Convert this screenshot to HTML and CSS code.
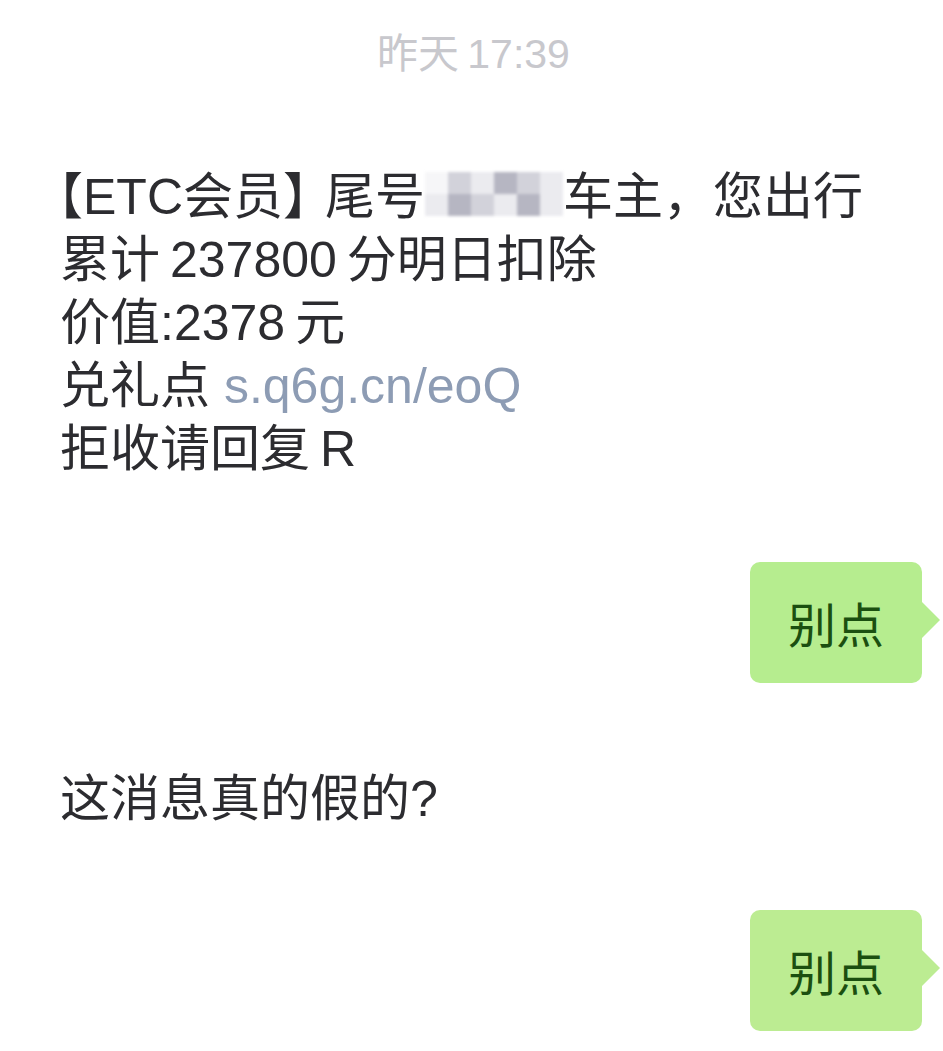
FILE: index.html
```html
<!DOCTYPE html>
<html lang="zh-CN">
<head>
  <meta charset="UTF-8">
  <title>短信</title>
  <link rel="stylesheet" href="styles.css">
</head>
<body>
  <div class="chat">
    <div class="hora">昨天&thinsp;17:39</div>

    <div class="msg recebida">
      <p><span class="colchete">【</span>ETC会员<span class="fecha">】</span>尾号<span class="mosaico"><i class="c4"></i><i class="c2"></i><i class="c1"></i><i class="c3"></i><i class="c2"></i><i class="c1"></i><i class="c1"></i><i class="c3"></i><i class="c2"></i><i class="c1"></i><i class="c3"></i><i class="c1"></i></span>车主，您出行</p>
      <p>累计&thinsp;237800&thinsp;分明日扣除</p>
      <p>价值:2378&thinsp;元</p>
      <p>兑礼点 <span class="link">s.q6g.cn/eoQ</span></p>
      <p>拒收请回复&thinsp;R</p>
    </div>

    <div class="linha-enviada">
      <div class="balao">别点</div>
    </div>

    <div class="msg pergunta">
      <p>这消息真的假的?</p>
    </div>

    <div class="linha-enviada ultima">
      <div class="balao">别点</div>
    </div>
  </div>
</body>
</html>
```

FILE: styles.css
```css
body {
  margin: 0;
  background-color: #fff;
  font-family: "Liberation Sans", "Noto Sans CJK SC", sans-serif;
  color: #2c2c30;
}
.chat {
  width: 943px;
  padding-top: 31px;
}
.hora {
  text-align: center;
  font-size: 41px;
  line-height: 46px;
  color: #c8c8cd;
  padding-left: 4px;
}
.msg {
  padding-left: 60px;
  font-size: 50px;
  line-height: 63px;
}
.msg p {
  margin: 0;
}
.colchete {
  margin-left: -27px;
}
.fecha {
  letter-spacing: -8px;
}
.recebida {
  margin-top: 89px;
}
.link {
  color: #8d9cb4;
}
.mosaico {
  display: inline-grid;
  grid-template-columns: repeat(6, 23px);
  grid-auto-rows: 22px;
  width: 138px;
  height: 44px;
  vertical-align: top;
  margin-top: 6px;
  filter: blur(1.5px);
}
.mosaico i {
  display: block;
  background-color: #ebebef;
}
.mosaico .c2 {
  background-color: #d2d2da;
}
.mosaico .c3 {
  background-color: #b6b6c2;
}
.mosaico .c4 {
  background-color: #f6f6f8;
}
.linha-enviada {
  display: flex;
  justify-content: flex-end;
  padding-right: 21px;
  margin-top: 81px;
}
.balao {
  position: relative;
  width: 172px;
  height: 121px;
  background-color: #b6ed8f;
  border-radius: 10px;
  font-family: "Noto Sans CJK SC", sans-serif;
  font-size: 48px;
  line-height: 121px;
  text-align: center;
  color: #1b4f10;
}
.balao::after {
  content: "";
  position: absolute;
  right: -18px;
  top: 40px;
  border-left: 18px solid #b6ed8f;
  border-top: 18px solid transparent;
  border-bottom: 18px solid transparent;
}
.pergunta {
  margin-top: 85px;
}
.ultima {
  margin-top: 79px;
}
.ultima .balao {
  background-color: #bcec92;
}
.ultima .balao::after {
  border-left-color: #bcec92;
}
```
